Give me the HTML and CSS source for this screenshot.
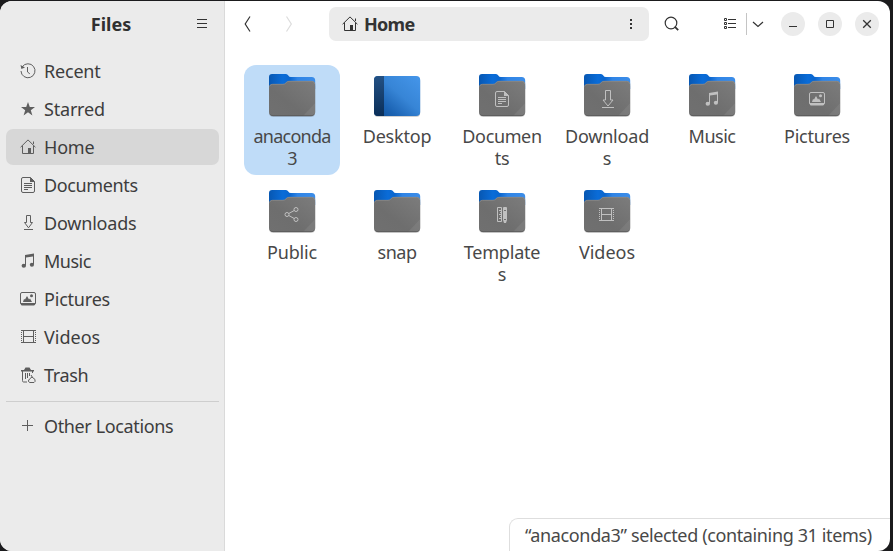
FILE: index.html
```html
<!DOCTYPE html>
<html lang="en">
<head>
<meta charset="utf-8">
<title>Files</title>
<link rel="stylesheet" href="styles.css">
</head>
<body>
<svg class="defs" width="0" height="0">
  <defs>
    <linearGradient id="front" x1="0" y1="1" x2="1" y2="0"><stop offset="0" stop-color="#707070"/><stop offset=".4" stop-color="#6e6e6e"/><stop offset="1" stop-color="#7c7c7c"/></linearGradient>
    <linearGradient id="back" x1="0" y1="0" x2="1" y2="0"><stop offset="0" stop-color="#0757b2"/><stop offset=".3" stop-color="#0a6cd8"/><stop offset=".45" stop-color="#0a66cf"/><stop offset=".62" stop-color="#2f84e6"/><stop offset="1" stop-color="#3c8de8"/></linearGradient>
    <linearGradient id="desk" x1="0" y1="1" x2="1" y2="0"><stop offset="0" stop-color="#0f4f98"/><stop offset=".25" stop-color="#1c64b4"/><stop offset=".55" stop-color="#3785d6"/><stop offset="1" stop-color="#4596ea"/></linearGradient>
    <linearGradient id="dock" x1="0" y1="0" x2="0" y2="1"><stop offset="0" stop-color="#235184"/><stop offset="1" stop-color="#0a2e58"/></linearGradient>
  </defs>
  <symbol id="recent" viewBox="0 0 16 16"><g fill="none" stroke="currentColor"><path d="M2.3 3.7A7 7 0 1 1 1 8"/><path d="M7.5 4v5l2.3 1.8"/></g><path d="M.5 2l.9 3.9L5 4.6z" fill="currentColor"/></symbol>
  <symbol id="star" viewBox="0 0 16 16"><path fill="currentColor" d="M8 1l1.800 5H15l-4.200 3.200L12.400 14.400 8 11.200l-4.400 3.200 1.600-5.200L1 6h5.200z"/></symbol>
  <symbol id="home" viewBox="0 0 16 16"><path fill="none" stroke="currentColor" d="M.6 8.2L8 .9l7.400 7.300M2.500 6.700v7.800h11V6.700M13.500 5V2.500"/><path fill="currentColor" d="M8 9h3v6H8z"/></symbol>
  <symbol id="doc" viewBox="0 0 16 16"><path fill="none" stroke="currentColor" d="M3 .5h7.500l4 4V14q0 1.500-1.500 1.500H3Q1.500 15.500 1.500 14V2Q1.500.5 3 .5zM4 6.500h8M4 8.500h8M4 10.500h8M4 12.500h4"/><path fill="currentColor" d="M10 0l5 5h-5z"/></symbol>
  <symbol id="down" viewBox="0 0 16 16"><path fill="none" stroke="currentColor" d="M6.500.5h4v7h2L8.500 12.800 4.500 7.500h2zM4 14.500h9"/></symbol>
  <symbol id="music" viewBox="0 0 16 16"><path fill="currentColor" d="M5 2l9-1.500V11.500h-1V3.500L6 4.500v8H5z"/><ellipse cx="3.800" cy="12.800" rx="2.200" ry="2" fill="currentColor"/><ellipse cx="11.900" cy="11.800" rx="2.100" ry="2" fill="currentColor"/></symbol>
  <symbol id="pic" viewBox="0 0 16 16"><path fill="none" stroke="currentColor" d="M2 1.500h12q1.500 0 1.500 1.500v9q0 1.500-1.500 1.500H2Q.5 13.500.5 12V3Q.5 1.500 2 1.500z"/><path fill="currentColor" d="M1 12h14v1.500q-.5 1-1 1H2q-1 0-1-1zM3 11l1-3 1 .5L7 5l2 3.500 1-1 2 3.500z"/><circle cx="11.500" cy="4.700" r="1.500" fill="currentColor"/></symbol>
  <symbol id="video" viewBox="0 0 16 16"><path fill="none" stroke="currentColor" d="M1 1.500h15M1 13.500h15M3.500 1v13M13.500 1v13M4 7.500h9"/><path fill="none" stroke="currentColor" stroke-dasharray="1 1" d="M1.500 1v13M15.500 1v13"/></symbol>
  <symbol id="trash" viewBox="0 0 16 16"><path fill="currentColor" d="M1 3h3l1.500-2.500h4L11 3h3v1.500H1z"/><path fill="none" stroke="currentColor" d="M2.500 4v9.500q0 1.500 1 1.500H7M5.500 6v6M7.500 6v5M9.500 6v3M12.500 4v2M9.500 12l2.500-2 3 2.500v2l-1 1H9.500L8.300 14zM11 8l1.500 2.500"/></symbol>
  <symbol id="plus" viewBox="0 0 16 16"><path fill="none" stroke="currentColor" d="M2 7.500h11M7.500 2v11"/></symbol>
  <symbol id="share" viewBox="0 0 16 16"><g fill="none" stroke="currentColor"><circle cx="3" cy="8" r="2"/><circle cx="12" cy="3" r="2"/><circle cx="12" cy="13" r="2"/><path d="M4.800 7l5.400-3M4.800 9l5.400 3"/></g></symbol>
  <symbol id="template" viewBox="0 0 16 16"><path fill="none" stroke="currentColor" d="M3.500.5h4v14h-4zM5 3.500h2M6 5.500h1M5 7.500h2M6 9.500h1M5 11.500h2"/><path fill="currentColor" fill-rule="evenodd" d="M9 1q0-1 1-1h2q1 0 1 1v12l-1 3h-2l-1-3zM10 3v1h2V3zM10 12v1h2v-1z"/></symbol>
  <symbol id="folder" viewBox="0 0 48 48">
    <path fill="#000" opacity=".16" d="M1 15h46.200v26.500q0 4.500-4.500 4.500H5.500Q1 46 1 41.500z"/>
    <path fill="url(#back)" d="M1 6q0-3 3-3h14q1.500 0 2.300 1.500T23 6h20.700q3.500 0 3.500 3.500V18H1z"/>
    <path fill="url(#front)" d="M1 16.500Q1 13 4.500 13H15q2 0 3-1.500T21 10h22.700q3.500 0 3.500 3.500V41q0 4-4 4H5q-4 0-4-4z"/>
    <path fill="none" stroke="#8e8e8e" stroke-width=".7" d="M1.500 15.500q.5-2.200 3-2.200H15q2 0 3-1.500t3-1.500h22.700q2.800 0 3.100 2.700"/>
    <path fill="#fff" opacity=".07" d="M47.200 32v9q0 4-4 4H35z"/>
    <path fill="none" stroke="#555" stroke-width=".8" d="M2.500 43.600q1 1.100 2.500 1.100h38.200q1.500 0 2.500-1.100"/>
  </symbol>
</svg>
<div class="window">
  <aside class="sidebar">
    <header class="side-head"><span class="app-title">Files</span>
      <svg class="menu" width="16" height="16"><path stroke="#333" d="M3 3.500h10M3 7.500h10M3 11.500h10"/></svg></header>
    <nav class="places">
      <a class="place"><svg><use href="#recent"/></svg><span class="snug">Recent</span></a>
      <a class="place"><svg><use href="#star"/></svg><span class="snug">Starred</span></a>
      <a class="place active"><svg><use href="#home"/></svg><span class="snug">Home</span></a>
      <a class="place"><svg><use href="#doc"/></svg><span class="tight">Documents</span></a>
      <a class="place"><svg><use href="#down"/></svg><span class="snug">Downloads</span></a>
      <a class="place"><svg><use href="#music"/></svg><span class="tighter">Music</span></a>
      <a class="place"><svg><use href="#pic"/></svg><span class="snug">Pictures</span></a>
      <a class="place"><svg><use href="#video"/></svg><span>Videos</span></a>
      <a class="place"><svg><use href="#trash"/></svg><span class="tight">Trash</span></a>
      <hr>
      <a class="place"><svg><use href="#plus"/></svg><span class="tight">Other Locations</span></a>
    </nav>
  </aside>
  <main class="content">
    <header class="toolbar">
      <svg class="nav-back" width="16" height="16"><path fill="none" stroke="#333" stroke-width="1.200" d="M10 .5L5.200 8l4.800 7.500"/></svg>
      <svg class="nav-next" width="16" height="16"><path fill="none" stroke="#dcdcdc" stroke-width="1.200" d="M5.500.5L10.300 8l-4.800 7.500"/></svg>
      <div class="path"><svg width="16" height="16"><use href="#home"/></svg><b>Home</b>
        <svg class="dots" width="16" height="16"><path fill="#333" d="M7 3h2v2H7zM7 7h2v2H7zM7 11h2v2H7z"/></svg></div>
      <svg class="search" width="16" height="16"><circle cx="7" cy="7" r="5.800" fill="none" stroke="#333" stroke-width="1.200"/><path stroke="#333" stroke-width="1.800" d="M10.700 10.700l3.500 3.500"/></svg>
      <svg class="view" width="16" height="16"><path fill="none" stroke="#333" d="M2.500 2.500h2v2h-2zM2.500 6.500h2v2h-2zM2.500 10.500h2v2h-2zM6 3.500h8M6 7.500h8M6 11.500h8"/></svg>
      <i class="split"></i>
      <svg class="chev" width="16" height="16"><path fill="none" stroke="#333" stroke-width="1.200" d="M3 6l5 4.500L13 6"/></svg>
      <div class="controls">
        <button><svg width="24" height="24"><path stroke="#333" d="M8 14.500h8"/></svg></button>
        <button><svg width="24" height="24"><path fill="none" stroke="#333" d="M8.500 8.500h7v7h-7z"/></svg></button>
        <button><svg width="24" height="24"><path stroke="#333" stroke-width="1.300" d="M8.200 8.200l7.600 7.600M15.800 8.200l-7.600 7.600"/></svg></button>
      </div>
    </header>
    <section class="grid">
      <div class="item selected"><svg><use href="#folder"/></svg><span class="tightest">anaconda<br>3</span></div>
      <div class="item"><svg viewBox="0 0 48 48"><rect x="1" y="6" width="46.200" height="40" rx="4" fill="#000" opacity=".18"/><rect x="1" y="5" width="46.200" height="40" rx="4" fill="url(#desk)"/><path fill="url(#dock)" d="M11 5H5Q1 5 1 9v32q0 4 4 4h6z"/></svg><span class="snug">Desktop</span></div>
      <div class="item"><svg><use href="#folder"/><use class="emblem" href="#doc" x="16" y="20" width="16" height="16"/></svg><span class="tight">Documen<br>ts</span></div>
      <div class="item"><svg><use href="#folder"/><path fill="none" stroke="#c0c0c0" d="M22.500 19.500h5v9.500h2.500L25 35l-5-6h2.500zM19 36.500h12"/></svg><span class="snug">Download<br>s</span></div>
      <div class="item"><svg><use href="#folder"/><use class="emblem" href="#music" x="16" y="20" width="16" height="16"/></svg><span class="tighter">Music</span></div>
      <div class="item"><svg><use href="#folder"/><use class="emblem" href="#pic" x="16" y="20" width="16" height="16"/></svg><span class="snug">Pictures</span></div>
      <div class="item"><svg><use href="#folder"/><use class="emblem" href="#share" x="16" y="19.500" width="16" height="16"/></svg><span class="snug">Public</span></div>
      <div class="item"><svg><use href="#folder"/></svg><span class="tighter">snap</span></div>
      <div class="item"><svg><use href="#folder"/><use class="emblem" href="#template" x="16" y="20" width="16" height="16"/></svg><span class="snug">Template<br>s</span></div>
      <div class="item"><svg><use href="#folder"/><use class="emblem" href="#video" x="15" y="20" width="16" height="16"/></svg><span>Videos</span></div>
    </section>
    <footer class="status"><span class="tight">“anaconda3” selected (containing 31 items)</span></footer>
  </main>
</div>
</body>
</html>
```
FILE: styles.css
```css
* { box-sizing: border-box; }
body { margin: 0; width: 893px; height: 551px; overflow: hidden; padding: 1px 3px 0 0; background: #1b1b1d; font: 18px/22px "Noto Sans", "Open Sans", sans-serif; color: #3d3d3d; }
svg { display: block; flex: none; }
.defs { position: absolute; }
.snug { letter-spacing: -.2px; }
.tight { letter-spacing: -.37px; }
.tighter { letter-spacing: -.5px; }
.tightest { letter-spacing: -.75px; }
.window { display: flex; height: 550px; border-radius: 12px; overflow: hidden; background: #fff; }
.sidebar { width: 225px; flex: none; background: #ebebeb; border-right: 1px solid #dadada; }
.side-head { height: 46px; display: grid; grid-template-columns: 1fr 90px 1fr; align-items: center; padding: 0 2px 0 0; }
.app-title { grid-column: 2; text-align: center; font-weight: 700; color: #303030; }
.menu { justify-self: end; margin-right: 12px; }
.places { display: flex; flex-direction: column; gap: 2px; padding: 6px 5px 0 6px; }
.place { display: flex; align-items: center; height: 36px; padding-left: 14px; gap: 8px; border-radius: 7px; white-space: nowrap; }
.place svg { width: 16px; height: 16px; color: #5e5e5e; }
.place.active { background: #d7d7d7; }
.places hr { width: 100%; margin: 6px 0 4px; border: 0; height: 1px; background: #cecece; }
.content { flex: 1; min-width: 0; display: flex; flex-direction: column; }
.toolbar { height: 46px; flex: none; display: flex; align-items: center; padding-left: 15px; }
.nav-next { margin-left: 25px; }
.path { width: 320px; height: 34px; margin-left: 32px; display: flex; align-items: center; background: #ebebeb; border-radius: 7px; padding: 0 10px 0 13px; gap: 6px; color: #333; }
.path b { letter-spacing: -.7px; }
.dots { margin-left: auto; }
.search { margin-left: 15px; }
.view { margin-left: 42px; }
.split { width: 1px; height: 22px; background: #c4c4c4; margin-left: 8px; }
.chev { margin-left: 3px; }
.controls { display: flex; gap: 13px; margin-left: 15px; }
.controls button { width: 24px; height: 24px; padding: 0; border: 0; border-radius: 50%; background: #ebebeb; }
.grid { display: grid; grid-template-columns: repeat(6, 96px); grid-template-rows: repeat(2, 110px); gap: 6px 9px; padding: 18px 0 0 19px; flex: 1; align-content: start; }
.item { display: flex; flex-direction: column; align-items: center; gap: 6px; padding: 6px 0; border-radius: 12px; text-align: center; white-space: nowrap; color: #484848; }
.item svg { width: 48px; height: 48px; }
.selected { background: #bfdcf8; }
.emblem { color: #c0c0c0; }
.status { align-self: flex-end; width: 381px; height: 33px; border: 1px solid #dedede; border-width: 1px 0 0 1px; border-radius: 9px 0 0 0; padding: 5px 0 0 15px; white-space: nowrap; color: #484848; }
```
